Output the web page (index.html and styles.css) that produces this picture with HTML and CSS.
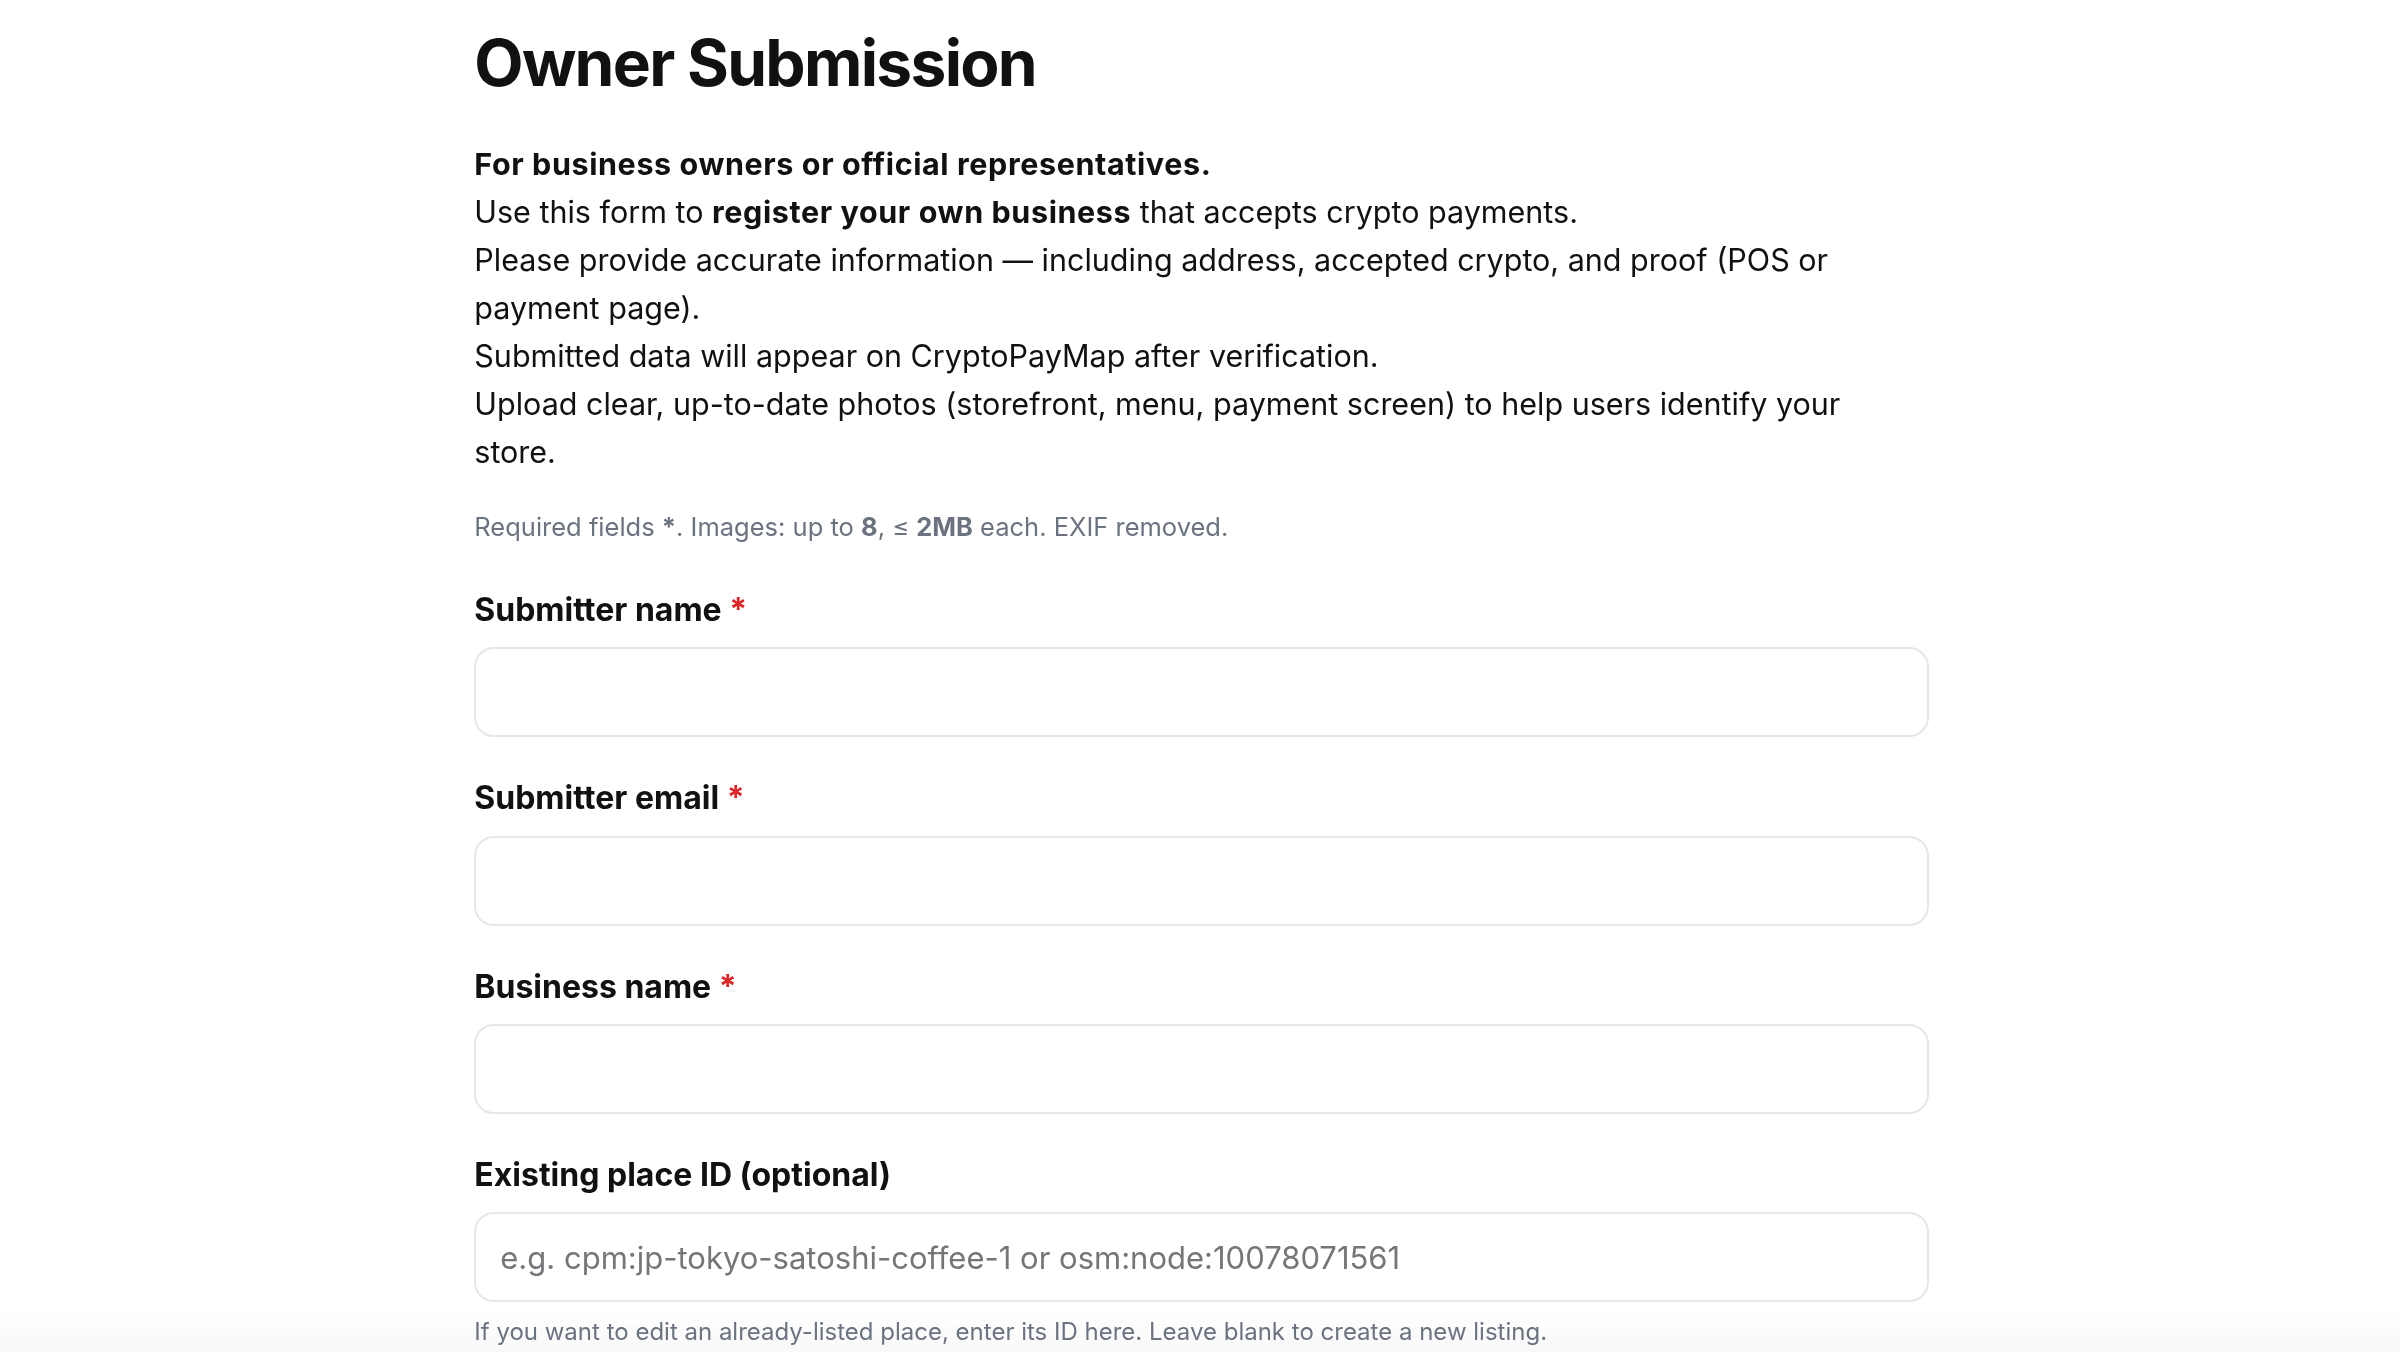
FILE: index.html
```html
<!DOCTYPE html>
<html lang="en">
<head>
<meta charset="utf-8">
<title>Owner Submission</title>
<link rel="stylesheet" href="styles.css">
</head>
<body>
<main class="page">
  <h1 class="title">Owner Submission</h1>
  <div class="intro">
    <p class="intro-line intro-strong">For business owners or official representatives.</p>
    <p class="intro-line">Use this form to <strong>register your own business</strong> that accepts crypto payments.</p>
    <p class="intro-line">Please provide accurate information — including address, accepted crypto, and proof (POS or payment page).</p>
    <p class="intro-line">Submitted data will appear on CryptoPayMap after verification.</p>
    <p class="intro-line">Upload clear, up-to-date photos (storefront, menu, payment screen) to help users identify your store.</p>
  </div>
  <p class="note">Required fields <strong>*</strong>. Images: up to <strong>8</strong>, ≤ <strong>2MB</strong> each. EXIF removed.</p>

  <form class="form">
    <div class="field">
      <label class="label" for="sname">Submitter name <span class="req">*</span></label>
      <input class="input" id="sname" type="text">
    </div>
    <div class="field">
      <label class="label" for="semail">Submitter email <span class="req">*</span></label>
      <input class="input" id="semail" type="email">
    </div>
    <div class="field">
      <label class="label" for="bname">Business name <span class="req">*</span></label>
      <input class="input" id="bname" type="text">
    </div>
    <div class="field field-last">
      <label class="label" for="pid">Existing place ID (optional)</label>
      <input class="input" id="pid" type="text" placeholder="e.g. cpm:jp-tokyo-satoshi-coffee-1 or osm:node:10078071561">
      <p class="help">If you want to edit an already-listed place, enter its ID here. Leave blank to create a new listing.</p>
    </div>
  </form>
</main>
<div class="fade"></div>
</body>
</html>
```

FILE: styles.css
```css
html {
  margin: 0;
  padding: 0;
  background: #ffffff;
}

body {
  margin: 0;
  padding: 0 0 0 3.6px;
  background: transparent;
  font-family: Inter, "Noto Sans", "Liberation Sans", sans-serif;
  color: #111111;
}

.page {
  max-width: 1455px;
  margin: 0 auto;
  padding-top: 25px;
  padding-bottom: 120px;
}

.title {
  margin: 0;
  font-size: 64px;
  line-height: 76.8px;
  font-weight: 700;
  letter-spacing: -1.7px;
  color: #111111;
}

.intro {
  margin-top: 38px;
  max-width: 1420px;
}

.intro-line {
  margin: 0;
  font-size: 30.5px;
  line-height: 48px;
  color: #111111;
}

.intro-strong {
  font-weight: 700;
  letter-spacing: 0.6px;
}

.intro-line strong {
  font-weight: 700;
  letter-spacing: 0.6px;
}

.note {
  margin: 31px 0 0;
  font-size: 25.5px;
  line-height: 39px;
  color: #6b7280;
}

.note strong {
  font-weight: 700;
}

.form {
  margin-top: 45px;
}

.field {
  display: flex;
  flex-direction: column;
  margin-bottom: 42px;
}

.label {
  font-size: 32px;
  line-height: 38.4px;
  font-weight: 700;
  color: #111111;
  margin-bottom: 18px;
}

.req {
  color: #dc2626;
}

.input {
  box-sizing: border-box;
  height: 90px;
  width: 100%;
  border: 2px solid #e6e6eb;
  border-radius: 20px;
  background: #ffffff;
  padding: 0 24px;
  font-family: Inter, "Noto Sans", "Liberation Sans", sans-serif;
  font-size: 31px;
  color: #111111;
  outline: none;
}

.input::placeholder {
  color: #75757a;
}

.help {
  margin: 12px 0 0;
  font-size: 24px;
  line-height: 36px;
  color: #6b7280;
}

.fade {
  position: fixed;
  z-index: -1;
  left: 0;
  right: 0;
  bottom: 0;
  height: 40px;
  background: linear-gradient(to bottom, rgba(248, 248, 249, 0), #f8f8f9);
  pointer-events: none;
}
```
